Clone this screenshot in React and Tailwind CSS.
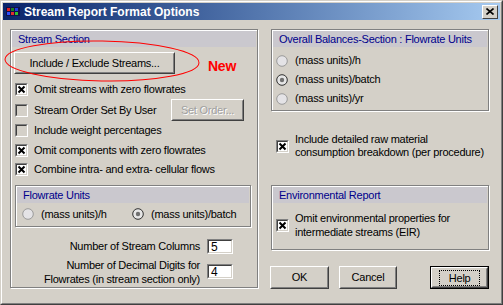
import React from "react";

const font = { fontFamily: '"Liberation Sans", Arial, sans-serif' };

const Check = ({ checked }) => (
  <span
    className={`w-[13px] h-[13px] shrink-0 border border-t-[#808080] border-l-[#808080] border-b-white border-r-white ${
      checked ? "bg-white" : "bg-[#d4d0c8]"
    }`}
  >
    <span className="block w-full h-full border border-t-[#404040] border-l-[#404040] border-b-[#d4d0c8] border-r-[#d4d0c8]">
      {checked && (
        <svg width="9" height="9" viewBox="0 0 9 9" className="block">
          <path d="M1.5 1.5 L7.5 7.5 M7.5 1.5 L1.5 7.5" stroke="#000" strokeWidth="2" />
        </svg>
      )}
    </span>
  </span>
);

const Radio = ({ checked }) => (
  <svg width="12" height="12" viewBox="0 0 12 12" className="shrink-0">
    <circle cx="6" cy="6" r="5.3" fill={checked ? "#e6e6e6" : "#e4e3e6"} stroke={checked ? "#303030" : "#9a9a9a"} />
    {checked && <circle cx="6" cy="6" r="2.2" fill="#707070" />}
  </svg>
);

const Button = ({ children, className = "", disabled, primary }) => (
  <div
    className={`flex items-center justify-center bg-[#d4d0c8] whitespace-nowrap ${
      primary ? "border border-black" : ""
    } ${className}`}
  >
    <div className="w-full h-full flex items-center justify-center border border-t-white border-l-white border-b-[#404040] border-r-[#404040]">
      <div className="w-full h-full flex items-center justify-center border border-t-[#d4d0c8] border-l-[#d4d0c8] border-b-[#808080] border-r-[#808080]">
        {primary ? (
          <span className="px-[9px] border border-dotted border-black leading-[14px]">{children}</span>
        ) : (
          <span className={disabled ? "text-[#a0a0a0] [text-shadow:1px_1px_0_#fff]" : ""}>{children}</span>
        )}
      </div>
    </div>
  </div>
);

const Group = ({ title, className = "", children }) => (
  <div className={`border border-[#808080] shadow-[inset_1px_1px_0_#fff,1px_1px_0_#fff] ${className}`}>
    <div className="mx-[1px] mt-[1px] h-[16px] bg-[#cac8ce] text-[#00008b] pl-[6px] leading-[16px] whitespace-nowrap">{title}</div>
    {children}
  </div>
);

const Field = ({ value }) => (
  <div className="w-[26px] h-[15px] bg-white border border-t-[#808080] border-l-[#808080] border-b-white border-r-white">
    <div className="w-full h-full border border-t-[#404040] border-l-[#404040] border-b-[#d4d0c8] border-r-[#d4d0c8] pl-[2px] leading-[12px] text-[12px]">
      {value}
    </div>
  </div>
);

export default function App() {
  return (
    <div className="w-[503px] h-[305px] bg-[#d4d0c8] text-[11px] tracking-[-0.25px] text-black relative whitespace-nowrap" style={font}>
      <div className="w-full h-full border border-t-[#d4d0c8] border-l-[#d4d0c8] border-b-[#404040] border-r-[#404040]">
        <div className="w-full h-full border border-t-white border-l-white border-b-[#808080] border-r-[#808080] p-[1px] flex flex-col">
          {/* title bar */}
          <div className="h-[17px] flex items-center bg-gradient-to-r from-[#0a246a] to-[#a6caf0] pl-[3px] pr-[2px]">
            <svg width="14" height="11" viewBox="0 0 14 11" className="shrink-0">
              <rect x="0" y="1" width="14" height="9" fill="#10104a" />
              <rect x="1" y="2" width="3" height="3" fill="#e02020" />
              <rect x="5" y="2" width="3" height="3" fill="#208020" />
              <rect x="9" y="2" width="3" height="3" fill="#2040e0" />
              <rect x="1" y="6" width="3" height="3" fill="#3050ff" />
              <rect x="5" y="6" width="3" height="3" fill="#e03030" />
              <rect x="9" y="6" width="3" height="3" fill="#30c030" />
            </svg>
            <span className="ml-[4px] text-white font-bold text-[12px] tracking-normal leading-none">Stream Report Format Options</span>
            <div className="ml-auto w-[16px] h-[14px] bg-[#d4d0c8] border border-t-white border-l-white border-b-[#404040] border-r-[#404040] flex items-center justify-center">
              <svg width="8" height="7" viewBox="0 0 8 7">
                <path d="M0.5 0.5 L7.5 6.5 M7.5 0.5 L0.5 6.5" stroke="#000" strokeWidth="1.6" />
              </svg>
            </div>
          </div>

          {/* body */}
          <div className="flex pl-[7px] pt-[9px] gap-[13px]">
            {/* left column */}
            <Group title="Stream Section" className="w-[248px] h-[259px]">
              <div className="px-[3px] pt-[5px]">
                <Button className="w-[161px] h-[22px]">Include / Exclude Streams...</Button>
                <div className="flex flex-col pl-[1px] mt-[5px]">
                  <label className="h-[20px] flex items-center gap-[6px]"><Check checked />Omit streams with zero flowrates</label>
                  <div className="h-[22px] flex items-center gap-[6px]">
                    <Check />
                    Stream Order Set By User
                    <Button disabled className="ml-auto mr-[10px] w-[73px] h-[22px]">Set Order...</Button>
                  </div>
                  <label className="h-[19px] flex items-center gap-[6px]"><Check />Include weight percentages</label>
                  <label className="h-[20px] flex items-center gap-[6px]"><Check checked />Omit components with zero flowrates</label>
                  <label className="h-[19px] flex items-center gap-[6px]"><Check checked />Combine intra- and extra- cellular flows</label>
                </div>
                <Group title="Flowrate Units" className="mt-[6px] ml-[1px] w-[236px] h-[42px]">
                  <div className="flex items-center h-[22px] pl-[6px]">
                    <label className="flex items-center gap-[7px] w-[110px]"><Radio />(mass units)/h</label>
                    <label className="flex items-center gap-[7px]"><Radio checked />(mass units)/batch</label>
                  </div>
                </Group>
                <div className="flex flex-col items-end pr-[21px] mt-[11px] gap-[3px]">
                  <div className="flex items-center gap-[7px]">
                    <span>Number of Stream Columns</span>
                    <Field value="5" />
                  </div>
                  <div className="flex items-center gap-[7px]">
                    <span className="text-right leading-[14px]">Number of Decimal Digits for<br />Flowrates (in stream section only)</span>
                    <Field value="4" />
                  </div>
                </div>
              </div>
            </Group>

            {/* right column */}
            <div className="w-[218px] flex flex-col">
              <Group title="Overall Balances-Section : Flowrate Units" className="h-[82px]">
                <div className="flex flex-col pl-[4px] pt-[4px]">
                  <label className="h-[19px] flex items-center gap-[7px]"><Radio />(mass units)/h</label>
                  <label className="h-[19px] flex items-center gap-[7px]"><Radio checked />(mass units)/batch</label>
                  <label className="h-[19px] flex items-center gap-[7px]"><Radio />(mass units)/yr</label>
                </div>
              </Group>
              <label className="flex items-center gap-[6px] mt-[22px] pl-[5px]">
                <Check checked />
                <span className="leading-[13px]">Include detailed raw material<br />consumption breakdown (per procedure)</span>
              </label>
              <Group title="Environmental Report" className="mt-[26px] h-[65px]">
                <label className="flex items-center gap-[6px] pl-[4px] pt-[8px]">
                  <Check checked />
                  <span className="leading-[14px]">Omit environmental properties for<br />intermediate streams (EIR)</span>
                </label>
              </Group>
              <div className="flex mt-[16px] -ml-[1px]">
                <Button className="w-[59px] h-[23px]">OK</Button>
                <Button className="ml-[10px] w-[59px] h-[23px]">Cancel</Button>
                <Button primary className="ml-[33px] w-[59px] h-[23px]">Help</Button>
              </div>
            </div>
          </div>
        </div>
      </div>

      {/* annotation overlay */}
      <svg width="210" height="50" viewBox="0 0 210 50" className="absolute left-[2px] top-[38px] pointer-events-none">
        <ellipse cx="100" cy="23" rx="97" ry="20" fill="none" stroke="#ff0000" strokeWidth="1" transform="rotate(1 100 23)" />
      </svg>
      <span className="absolute left-[208px] top-[59px] text-[#ff0000] font-bold text-[14px] leading-none" style={font}>New</span>
    </div>
  );
}
